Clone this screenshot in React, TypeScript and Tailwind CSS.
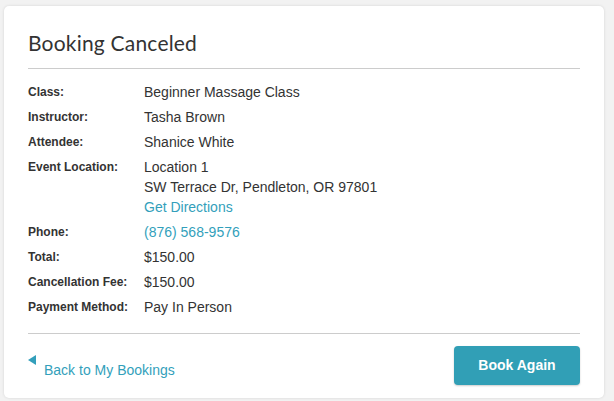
import { ReactNode } from 'react';

const rows: { label: string; value: ReactNode }[] = [
  { label: 'Class:', value: 'Beginner Massage Class' },
  { label: 'Instructor:', value: 'Tasha Brown' },
  { label: 'Attendee:', value: 'Shanice White' },
  {
    label: 'Event Location:',
    value: (
      <div className="flex flex-col leading-[20px]">
        <span>Location 1</span>
        <span>SW Terrace Dr, Pendleton, OR 97801</span>
        <a className="text-[#339fbb]">Get Directions</a>
      </div>
    ),
  },
  { label: 'Phone:', value: <a className="text-[#339fbb]">(876) 568-9576</a> },
  { label: 'Total:', value: '$150.00' },
  { label: 'Cancellation Fee:', value: '$150.00' },
  { label: 'Payment Method:', value: 'Pay In Person' },
];

export default function App() {
  return (
    <div className="w-[614px] h-[401px] bg-[#f2f2f2] pt-[6px] pl-[4px] font-['Liberation_Sans',Arial,sans-serif]">
      <div className="w-[600px] h-[392px] bg-white rounded-[5px] shadow-[0_0_3px_rgba(0,0,0,0.12)] px-[24px]">
        {/* Header */}
        <h1 className="pt-[25px] pb-[13px] text-[21px] leading-[24px] text-[#333] font-['Lato',sans-serif] tracking-[0.2px] border-b border-[#cccccc]">
          Booking Canceled
        </h1>

        {/* Details */}
        <div className="pt-[13px] pb-[16px] flex flex-col gap-[5px] border-b border-[#cccccc]">
          {rows.map((r) => (
            <div key={r.label} className="flex items-start">
              <div className="w-[116px] shrink-0 text-[12px] font-bold text-[#333] leading-[20px]">{r.label}</div>
              <div className="text-[14px] text-[#333] leading-[20px]">{r.value}</div>
            </div>
          ))}
        </div>

        {/* Footer */}
        <div className="flex items-start justify-between pt-[12px]">
          <a className="relative mt-[14px] text-[14px] text-[#339fbb] pl-[16px] leading-[20px]">
            <span className="absolute left-0 top-[-5px] w-0 h-0 border-y-[5px] border-y-transparent border-r-[8px] border-r-[#339fbb]" />
            Back to My Bookings
          </a>
          <button className="w-[126px] h-[39px] rounded-[4px] bg-[#319fb6] text-white text-[14px] font-bold shadow-[0_1px_2px_rgba(0,0,0,0.2)]">
            Book Again
          </button>
        </div>
      </div>
    </div>
  );
}
